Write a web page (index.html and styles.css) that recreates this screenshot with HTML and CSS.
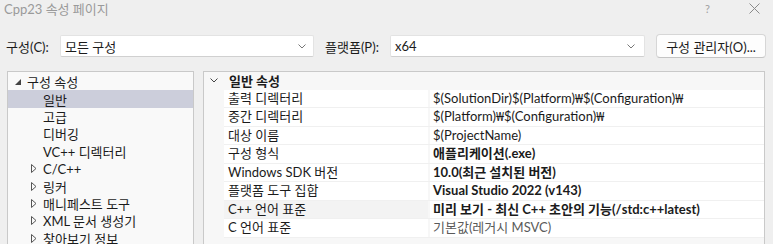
FILE: index.html
```html
<!DOCTYPE html>
<html lang="ko">
<head>
  <meta charset="UTF-8">
  <title>Cpp23 속성 페이지</title>
  <link rel="stylesheet" href="styles.css">
</head>
<body>
  <div class="titlebar">
    <span class="title">Cpp23 속성 페이지</span>
    <span class="help">?</span>
    <svg class="close" width="11" height="11" viewBox="0 0 11 11"><path d="M0.5 0.5 L10.5 10.5 M10.5 0.5 L0.5 10.5" stroke="#8a8a8a" stroke-width="1" fill="none"/></svg>
  </div>

  <div class="toolbar">
    <span class="label label-config">구성(C):</span>
    <div class="select select-config">
      <span>모든 구성</span>
      <svg width="8" height="5" viewBox="0 0 8 5"><path d="M0.5 0.5 L4 4 L7.5 0.5" stroke="#777" fill="none"/></svg>
    </div>
    <span class="label label-platform">플랫폼(P):</span>
    <div class="select select-platform">
      <span>x64</span>
      <svg width="8" height="5" viewBox="0 0 8 5"><path d="M0.5 0.5 L4 4 L7.5 0.5" stroke="#777" fill="none"/></svg>
    </div>
    <button class="btn">구성 관리자(O)...</button>
  </div>

  <div class="main">
    <div class="tree">
      <div class="node root">
        <svg class="tri" width="6" height="6" viewBox="0 0 6 6"><polygon points="6,0 6,6 0,6" fill="#444"/></svg>
        <span>구성 속성</span>
      </div>
      <div class="node leaf selected">일반</div>
      <div class="node leaf">고급</div>
      <div class="node leaf">디버깅</div>
      <div class="node leaf">VC++ 디렉터리</div>
      <div class="node branch">
        <svg class="exp" width="6" height="9" viewBox="0 0 6 9"><polygon points="0.5,0.5 5,4.5 0.5,8.5" fill="none" stroke="#555"/></svg>
        <span>C/C++</span>
      </div>
      <div class="node branch">
        <svg class="exp" width="6" height="9" viewBox="0 0 6 9"><polygon points="0.5,0.5 5,4.5 0.5,8.5" fill="none" stroke="#555"/></svg>
        <span>링커</span>
      </div>
      <div class="node branch">
        <svg class="exp" width="6" height="9" viewBox="0 0 6 9"><polygon points="0.5,0.5 5,4.5 0.5,8.5" fill="none" stroke="#555"/></svg>
        <span>매니페스트 도구</span>
      </div>
      <div class="node branch">
        <svg class="exp" width="6" height="9" viewBox="0 0 6 9"><polygon points="0.5,0.5 5,4.5 0.5,8.5" fill="none" stroke="#555"/></svg>
        <span>XML 문서 생성기</span>
      </div>
      <div class="node branch">
        <svg class="exp" width="6" height="9" viewBox="0 0 6 9"><polygon points="0.5,0.5 5,4.5 0.5,8.5" fill="none" stroke="#555"/></svg>
        <span>찾아보기 정보</span>
      </div>
    </div>

    <div class="grid">
      <div class="group">
        <svg class="chev" width="8" height="5" viewBox="0 0 8 5"><path d="M0.5 0.5 L4 4 L7.5 0.5" stroke="#444" fill="none"/></svg>
        <span>일반 속성</span>
      </div>
      <div class="prop"><div class="name">출력 디렉터리</div><div class="value">$(SolutionDir)$(Platform)<span class="won">₩</span>$(Configuration)<span class="won">₩</span></div></div>
      <div class="prop"><div class="name">중간 디렉터리</div><div class="value">$(Platform)<span class="won">₩</span>$(Configuration)<span class="won">₩</span></div></div>
      <div class="prop"><div class="name">대상 이름</div><div class="value">$(ProjectName)</div></div>
      <div class="prop"><div class="name">구성 형식</div><div class="value bold">애플리케이션(.exe)</div></div>
      <div class="prop"><div class="name">Windows SDK 버전</div><div class="value bold">10.0(최근 설치된 버전)</div></div>
      <div class="prop"><div class="name">플랫폼 도구 집합</div><div class="value bold">Visual Studio 2022 (v143)</div></div>
      <div class="prop hover"><div class="name">C++ 언어 표준</div><div class="value bold">미리 보기 - 최신 C++ 초안의 기능(/std:c++latest)</div></div>
      <div class="prop"><div class="name">C 언어 표준</div><div class="value muted">기본값(레거시 MSVC)</div></div>
    </div>
  </div>
</body>
</html>
```

FILE: styles.css
```css
    body {
      margin: 0;
      width: 773px;
      height: 244px;
      overflow: hidden;
      background-color: #efefef;
      color: #1b1b1b;
      font-family: Lato, "Noto Sans CJK KR", sans-serif;
      font-size: 13px;
    }
    .titlebar {
      display: flex;
      align-items: center;
      height: 17px;
      padding-left: 4px;
    }
    .title {
      color: #9a9a9a;
    }
    .help {
      margin-left: auto;
      color: #a0a0a0;
      font-size: 11px;
    }
    .close {
      margin-left: 39px;
      margin-right: 13px;
    }
    .toolbar {
      display: flex;
      align-items: center;
      margin-top: 17px;
      height: 24px;
      padding-left: 6px;
    }
    .label-config {
      width: 54px;
    }
    .label-platform {
      width: 65px;
      margin-left: 11px;
    }
    .select {
      box-sizing: border-box;
      display: flex;
      align-items: center;
      justify-content: space-between;
      height: 22px;
      padding: 0 7px 0 4px;
      background: #fff;
      border: 1px solid #e3e3e3;
      border-bottom-color: #d0d0d0;
      border-radius: 2px;
    }
    .select-config {
      width: 254px;
    }
    .select-platform {
      width: 255px;
      padding-right: 9px;
    }
    .btn {
      box-sizing: border-box;
      width: 110px;
      height: 24px;
      margin-left: 11px;
      padding: 0;
      font: inherit;
      color: #1b1b1b;
      background: #fdfdfd;
      border: 1px solid #d6d6d6;
      border-bottom-color: #c4c4c4;
      border-radius: 4px;
    }
    .main {
      display: flex;
      align-items: flex-start;
      margin-top: 13px;
      padding-left: 7px;
    }
    .tree {
      box-sizing: border-box;
      width: 187px;
      height: 200px;
      padding-top: 1px;
      background: #f9f9f9;
      border: 1px solid #c9c9c9;
    }
    .node {
      display: flex;
      align-items: center;
      height: 17.4px;
      white-space: nowrap;
    }
    .root .tri {
      margin-left: 7px;
      margin-right: 6px;
    }
    .leaf {
      padding-left: 35px;
    }
    .branch .exp {
      margin-left: 23px;
      margin-right: 6px;
    }
    .selected {
      background: #cccedb;
    }
    .grid {
      box-sizing: border-box;
      width: 562px;
      height: 200px;
      margin-left: 9px;
      background: #f7f7f7;
      border: 1px solid #c9c9c9;
    }
    .group {
      display: flex;
      align-items: center;
      height: 17.5px;
      font-weight: bold;
    }
    .group .chev {
      margin-left: 6px;
      margin-right: 11px;
    }
    .prop {
      display: flex;
      margin-left: 20px;
      height: 17.5px;
      border-bottom: 1px solid #f0f0f0;
      white-space: nowrap;
    }
    .prop .name {
      width: 200px;
      padding-left: 4px;
      background: #fff;
      line-height: 17.5px;
    }
    .prop .value {
      flex: 1;
      margin-left: 2px;
      padding-left: 3px;
      background: #fff;
      line-height: 17.5px;
    }
    .prop.hover .name {
      background: #f3f3f3;
    }
    .won {
      font-family: "Open Sans", "Noto Sans", sans-serif;
      font-size: 12px;
    }
    .bold {
      font-weight: bold;
    }
    .muted {
      color: #5a5a5a;
    }
```
